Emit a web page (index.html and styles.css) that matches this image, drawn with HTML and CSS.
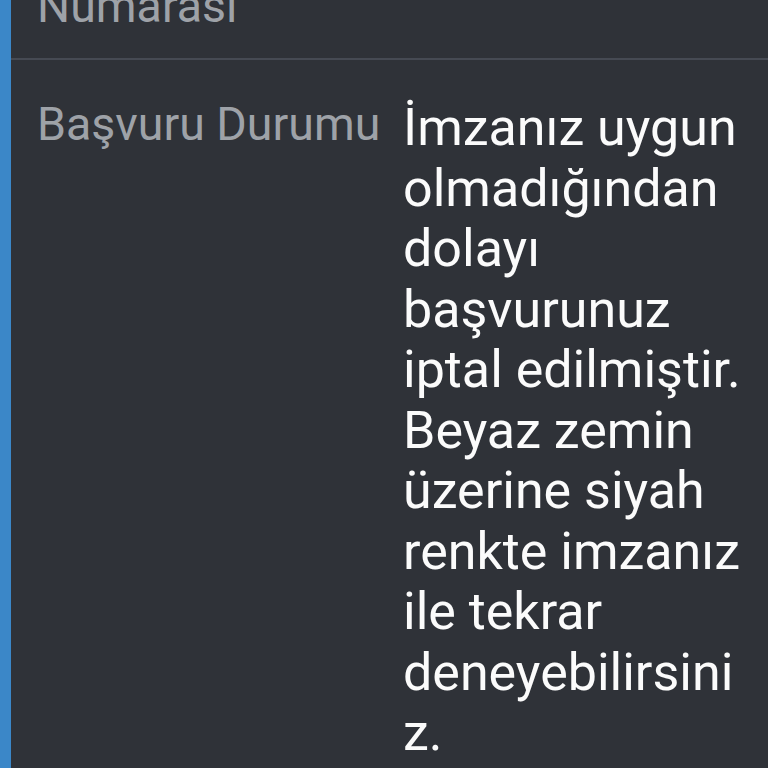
FILE: index.html
```html
<!DOCTYPE html>
<html lang="tr">
<head>
<meta charset="utf-8">
<link rel="stylesheet" href="styles.css">
</head>
<body>
<div class="card">
  <div class="row row-first">
    <div class="label">Başvuru<br>Numarası</div>
    <div class="value"></div>
  </div>
  <div class="row">
    <div class="label nowrap">Başvuru Durumu</div>
    <div class="value value-shift">İmzanız uygun olmadığından dolayı başvurunuz iptal edilmiştir. Beyaz zemin üzerine siyah renkte imzanız ile tekrar deneyebilirsiniz.</div>
  </div>
</div>
</body>
</html>
```
FILE: styles.css
```css
html, body {
  margin: 0;
  padding: 0;
  background: #2f3238;
  height: 100%;
  overflow: hidden;
}
.card {
  border-left: 11px solid #3b87c8;
  min-height: 100%;
  font-family: Roboto, "Noto Sans", sans-serif;
  margin-top: -78px;
}
.row {
  display: grid;
  grid-template-columns: 343px 1fr;
  column-gap: 23px;
  padding: 36px 15px 30px 26px;
  align-items: start;
}
.row-first {
  padding-top: 0;
  padding-bottom: 24px;
  border-bottom: 2px solid #464a53;
}
.label {
  font-size: 46.5px;
  line-height: 56px;
  color: #9ea2a8;
}
.nowrap {
  white-space: nowrap;
}
.value {
  font-size: 52px;
  line-height: 60.5px;
  color: #fbfbfb;
  overflow-wrap: anywhere;
}
.value-shift {
  padding-top: 2px;
}
```
